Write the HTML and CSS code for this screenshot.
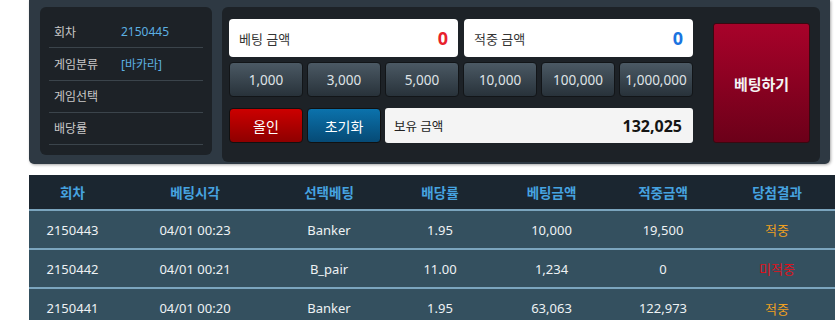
FILE: index.html
```html
<!DOCTYPE html>
<html lang="ko">
  <head>
    <meta charset="UTF-8" />
    <meta name="viewport" content="width=device-width, initial-scale=1.0" />
    <title>베팅</title>
    <link rel="stylesheet" href="styles.css">
  </head>
  <body>
    <div class="page">
      <div class="bet-panel">
        <div class="info-card">
          <div class="info-row"><span class="info-label">회차</span><span class="info-value">2150445</span></div>
          <div class="info-row"><span class="info-label">게임분류</span><span class="info-value">[바카라]</span></div>
          <div class="info-row"><span class="info-label">게임선택</span><span class="info-value"></span></div>
          <div class="info-row"><span class="info-label">배당률</span><span class="info-value"></span></div>
        </div>
        <div class="bet-card">
          <div class="bet-main">
            <div class="amount-row">
              <div class="amount-box">
                <span class="amount-label">베팅 금액</span>
                <span class="amount-value red">0</span>
              </div>
              <div class="amount-box">
                <span class="amount-label">적중 금액</span>
                <span class="amount-value blue">0</span>
              </div>
            </div>
            <div class="chip-row">
              <button class="chip">1,000</button>
              <button class="chip">3,000</button>
              <button class="chip">5,000</button>
              <button class="chip">10,000</button>
              <button class="chip">100,000</button>
              <button class="chip">1,000,000</button>
            </div>
            <div class="action-row">
              <button class="action-btn allin-btn">올인</button>
              <button class="action-btn reset-btn">초기화</button>
              <div class="balance-box">
                <span class="balance-label">보유 금액</span>
                <span class="balance-value">132,025</span>
              </div>
            </div>
          </div>
          <button class="bet-btn">베팅하기</button>
        </div>
      </div>

      <table class="history">
        <colgroup>
          <col style="width: 87px" />
          <col style="width: 158px" />
          <col style="width: 110px" />
          <col style="width: 112px" />
          <col style="width: 111px" />
          <col style="width: 112px" />
          <col />
        </colgroup>
        <thead>
          <tr>
            <th>회차</th>
            <th>베팅시각</th>
            <th>선택베팅</th>
            <th>배당률</th>
            <th>베팅금액</th>
            <th>적중금액</th>
            <th>당첨결과</th>
          </tr>
        </thead>
        <tbody>
          <tr>
            <td>2150443</td>
            <td>04/01 00:23</td>
            <td>Banker</td>
            <td>1.95</td>
            <td>10,000</td>
            <td>19,500</td>
            <td class="win">적중</td>
          </tr>
          <tr>
            <td>2150442</td>
            <td>04/01 00:21</td>
            <td>B_pair</td>
            <td>11.00</td>
            <td>1,234</td>
            <td>0</td>
            <td class="lose">미적중</td>
          </tr>
          <tr>
            <td>2150441</td>
            <td>04/01 00:20</td>
            <td>Banker</td>
            <td>1.95</td>
            <td>63,063</td>
            <td>122,973</td>
            <td class="win">적중</td>
          </tr>
        </tbody>
      </table>
    </div>
  </body>
</html>
```

FILE: styles.css
```css
* {
  margin: 0;
  padding: 0;
  box-sizing: border-box;
  font-family: "Noto Sans", "Noto Sans CJK KR", sans-serif;
}
body {
  background: white;
  overflow: hidden;
}
.page {
  padding-left: 29px;
}
.bet-panel {
  width: 801px;
  height: 164px;
  background: #2e3943;
  border-radius: 0 0 5px 5px;
  box-shadow: 1px 1px 3px rgba(0, 0, 0, 0.35);
  padding: 7px 10px 2px 11px;
  display: flex;
  gap: 10px;
  align-items: flex-start;
}
.info-card {
  width: 173px;
  height: 148px;
  background: #1d2227;
  border-radius: 6px;
  padding: 9px 9px 10px;
  display: flex;
  flex-direction: column;
}
.info-row {
  flex: 1;
  display: flex;
  align-items: center;
  border-bottom: 1px solid #3b444b;
  padding-left: 5px;
  font-size: 12px;
}
.info-label {
  width: 67px;
  color: #c9c9c9;
}
.info-value {
  color: #5cb0e2;
}
.bet-card {
  flex: 1;
  height: 155px;
  background: #1d2227;
  border-radius: 6px;
  padding: 12px 10px 0 7px;
  display: flex;
  gap: 20px;
  align-items: flex-start;
}
.bet-main {
  width: 464px;
  display: flex;
  flex-direction: column;
}
.amount-row {
  display: flex;
  gap: 6px;
}
.amount-box {
  flex: 1;
  height: 38px;
  background: white;
  border-radius: 4px;
  display: flex;
  justify-content: space-between;
  align-items: center;
  padding: 0 10px 0 10px;
}
.amount-label {
  font-size: 13px;
  color: #333;
}
.amount-value {
  font-size: 18px;
  font-weight: 700;
}
.amount-value.red {
  color: #e8212b;
}
.amount-value.blue {
  color: #1a74e0;
}
.chip-row {
  display: flex;
  gap: 4px;
  margin-top: 5px;
}
.chip {
  flex: 1;
  height: 35px;
  border: 1px solid #121518;
  border-radius: 4px;
  background: linear-gradient(#4b5964, #28323a);
  color: #dfe3e6;
  font-size: 13.5px;
}
.action-row {
  display: flex;
  gap: 4px;
  margin-top: 11px;
}
.action-btn {
  width: 74px;
  height: 35px;
  border: 1px solid #111;
  border-radius: 4px;
  color: white;
  font-size: 14px;
}
.allin-btn {
  background: linear-gradient(#cc0000, #8e0000);
}
.reset-btn {
  background: linear-gradient(#0b72ac, #064a75);
}
.balance-box {
  flex: 1;
  height: 35px;
  background: #f4f4f4;
  border-radius: 3px;
  display: flex;
  justify-content: space-between;
  align-items: center;
  padding: 0 11px 0 9px;
}
.balance-label {
  font-size: 12.5px;
  color: #222;
}
.balance-value {
  font-size: 16px;
  font-weight: 700;
  color: #151515;
}
.bet-btn {
  width: 97px;
  height: 120px;
  margin-top: 4px;
  border: 1px solid #3a0810;
  border-radius: 3px;
  background: linear-gradient(#a8022a, #6c0019);
  color: #f4f4f4;
  font-size: 15px;
  font-weight: 700;
}
.history {
  width: 806px;
  margin-top: 11px;
  border-collapse: collapse;
  table-layout: fixed;
}
.history th {
  height: 35px;
  background: #1b2630;
  color: #46a3e0;
  font-size: 13.5px;
  font-weight: 700;
  text-align: center;
}
.history td {
  height: 39px;
  background: #34505f;
  border-top: 2px solid #7ba5be;
  color: #eef2f4;
  font-size: 13px;
  text-align: center;
}
.history td.win {
  color: #f0a020;
}
.history td.lose {
  color: #e0101a;
}
```
